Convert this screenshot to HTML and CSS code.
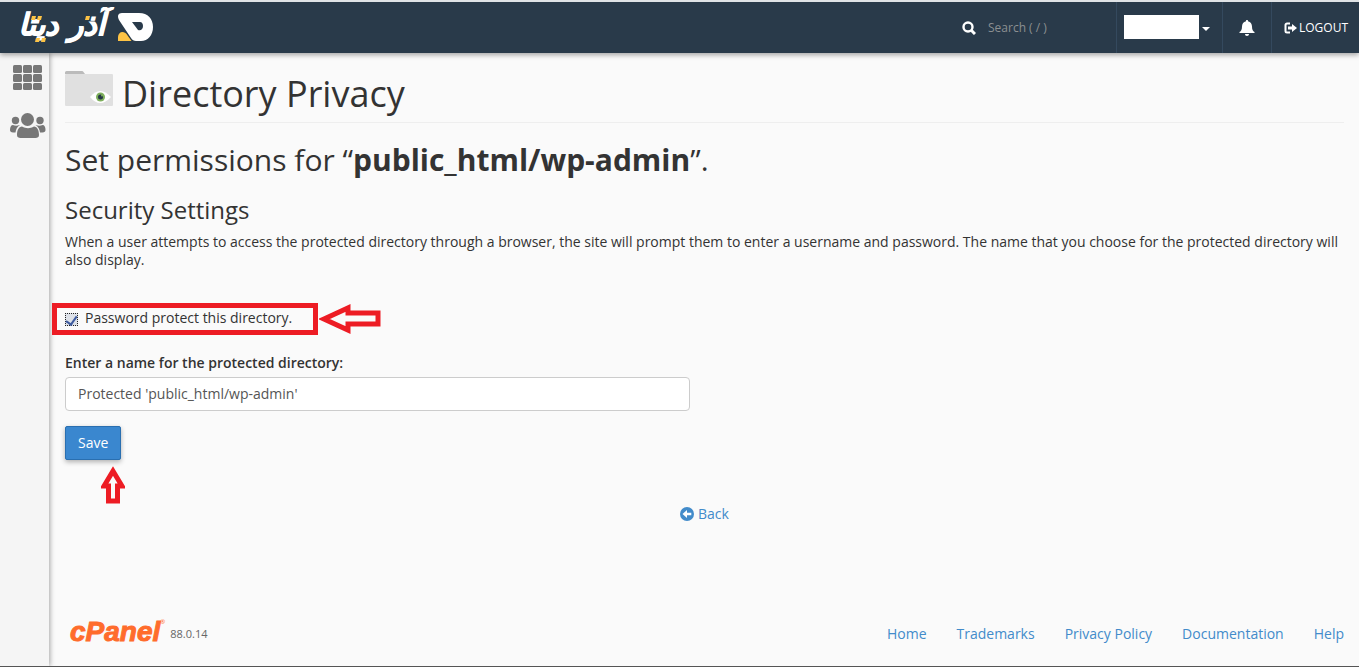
FILE: index.html
```html
<!DOCTYPE html>
<html lang="en">
<head>
<meta charset="utf-8">
<title>Directory Privacy</title>
<link rel="stylesheet" href="styles.css">
</head>
<body>
<header class="topbar">
  <a class="brand" href="#" aria-label="Home page">
    <svg width="136" height="40" viewBox="0 0 136 40">
      <text class="brand-text" x="87" y="28" text-anchor="start" direction="rtl" lang="fa">آذر دیتا</text>
      <path fill="#fdc345" d="M14 9h4l-1 4h-4zM20 9h4l-1 4h-4zM18 31h4l-1 4h-4zM24 31h4l-1 4h-4zM68 9h4l-1 4h-4z"/>
      <path fill="#fff" fill-rule="evenodd" d="M104 6h17c9 0 14 6 14 14s-5 14-12 14h-5c-2 0-4-1-5-3L101 13c-2-4-1-7 3-7zM114 15l6 8c3 1 5-1 5-4 0-2-1-4-3-4z"/>
      <path fill="#fdc345" d="M100 34v-4c0-3 2-5 4.500-5 2 0 3 1 4 2l5 7z"/>
    </svg>
  </a>
  <form class="search">
    <svg width="14" height="14" viewBox="0 0 14 14" aria-hidden="true"><circle cx="6" cy="6" r="4.500" fill="none" stroke="#fff" stroke-width="2.400"/><path d="M9 9l4 4" stroke="#fff" stroke-width="3"/></svg>
    <input type="text" aria-label="Search" placeholder="Search ( / )">
  </form>
  <button class="account" type="button" aria-label="Account"><span class="account-name"></span><span class="caret"></span></button>
  <button class="alerts" type="button" aria-label="Notifications">
    <svg width="16" height="16" viewBox="0 0 16 16" fill="#fff"><path d="M8 0c.8 0 1.100.5 1 1.200 2.500.6 4 2.600 4 5.300 0 3 .8 4.500 2.500 5.500v1H.5v-1C2.200 11 3 9.500 3 6.500c0-2.700 1.500-4.700 4-5.300C6.900.5 7.200 0 8 0zM6 14h4c0 1.200-.8 2-2 2s-2-.8-2-2z"/></svg>
  </button>
  <a class="logout" href="#"><svg width="13" height="12" viewBox="0 0 13 12" aria-hidden="true"><path d="M6 1.500H3A1.500 1.500 0 0 0 1.500 3v6A1.500 1.500 0 0 0 3 10.500h3" fill="none" stroke="#fff" stroke-width="2"/><path fill="#fff" d="M4 4.500h4V2l5 4-5 4V7.500H4z"/></svg><span>LOGOUT</span></a>
</header>
<div class="page">
  <nav class="sidebar" aria-label="Main">
    <a href="#" aria-label="Tools"><svg width="30" height="26" viewBox="0 0 30 26" fill="#777"><rect width="9" height="8" rx="1.500"/><rect x="10" width="9" height="8" rx="1.500"/><rect x="20" width="9" height="8" rx="1.500"/><rect y="9" width="9" height="8" rx="1.500"/><rect x="10" y="9" width="9" height="8" rx="1.500"/><rect x="20" y="9" width="9" height="8" rx="1.500"/><rect y="18" width="9" height="7" rx="1.500"/><rect x="10" y="18" width="9" height="7" rx="1.500"/><rect x="20" y="18" width="9" height="7" rx="1.500"/></svg></a>
    <a href="#" aria-label="User manager"><svg width="36" height="26" viewBox="0 0 36 26" fill="#777"><circle cx="17.500" cy="6.500" r="6.500"/><circle cx="5.500" cy="7.500" r="3.700"/><circle cx="30" cy="7.500" r="3.700"/><path d="M7 22c0-5 2-8.500 5-8.500 2 1.300 4 1.700 6 1.700s4-.4 6-1.700c3 0 5 3.500 5 8.500 0 2.300-1.500 3-3.500 3h-15C8.500 25 7 24.300 7 22z"/><path d="M3 12c2 1 4 1 7 0-3 2-4 4-4.500 7.500H3c-2 0-3-1-3-2.500C0 14 1 12 3 12zM32.500 12c-2 1-4 1-7 0 3 2 4 4 4.500 7.500h2.500c2 0 3-1 3-2.500 0-3-1-5-3-5z"/></svg></a>
  </nav>
  <div class="content">
    <main>
      <h1><svg width="48" height="36" viewBox="0 0 48 36" aria-hidden="true"><rect y="3" width="48" height="32" rx="1" fill="#e0e0e0"/><path fill="#bbb" d="M0 3V1.500Q0 0 1.500 0H17q1 0 1.500 1L20 3z"/><path fill="#fff" d="M25 26q10-12 21 0-11 12-21 0z"/><circle cx="35.500" cy="26" r="4.500" fill="#7fb05d"/><circle cx="35.500" cy="26" r="2.500" fill="#253746"/><circle cx="37" cy="24.500" r="1" fill="#7fb05d"/></svg><span>Directory Privacy</span></h1>
      <h2>Set permissions for “<strong>public_html/wp-admin</strong>”.</h2>
      <h3>Security Settings</h3>
      <p>When a user attempts to access the protected directory through a browser, the site will prompt them to enter a username and password. The name that you choose for the protected directory will also display.</p>
      <form>
        <div class="protect">
          <input id="protect" type="checkbox" checked><label for="protect">Password protect this directory.</label>
          <svg class="arrow-left" width="64" height="30" viewBox="0 0 64 30" aria-hidden="true"><path d="M5 15L29 4v5h30v11H29v6z"/></svg>
        </div>
        <label class="name-label" for="dirname">Enter a name for the protected directory:</label>
        <input class="name-input" id="dirname" type="text" value="Protected 'public_html/wp-admin'">
        <div class="save-row">
          <button class="save" type="submit">Save</button>
          <svg class="arrow-up" width="24" height="38" viewBox="0 0 24 38" aria-hidden="true"><path d="M12 5L3 20h4.500v15h9V20H21z"/></svg>
        </div>
      </form>
      <a class="back" href="#"><svg width="14" height="14" viewBox="0 0 14 14" aria-hidden="true"><circle cx="7" cy="7" r="7" fill="#428bca"/><path fill="#fff" d="M2.500 7L7 3v2.800h4.300v2.400H7V11z"/></svg><span>Back</span></a>
    </main>
    <footer>
      <span class="cpanel">cPanel</span><span class="reg">®</span><span class="version">88.0.14</span>
      <nav class="links" aria-label="Footer"><a href="#">Home</a><a href="#">Trademarks</a><a href="#">Privacy Policy</a><a href="#">Documentation</a><a href="#">Help</a></nav>
    </footer>
  </div>
</div>
</body>
</html>
```
FILE: styles.css
```css
* { box-sizing: border-box; }
body {
  margin: 0;
  min-height: 100vh;
  display: flex;
  flex-direction: column;
  border-top: 2px solid #dfe3e6;
  border-bottom: 1px solid #555;
  background: #fafafa;
  color: #333;
  font: 14px/18px "Open Sans", "Noto Sans", sans-serif;
}
a { color: #428bca; text-decoration: none; }
svg { display: block; flex: none; }
button, input { font: inherit; }

.topbar {
  position: relative;
  z-index: 2;
  display: flex;
  height: 51px;
  background: #293a4a;
  box-shadow: 0 2px 5px rgba(0, 0, 0, .35);
}
.brand { margin: 5px auto 0 18px; }
.brand-text { font: italic bold 30px "DejaVu Sans", sans-serif; fill: #fff; stroke: #fff; stroke-width: 1px; }
.search { display: flex; align-items: center; width: 154px; gap: 12px; }
.search input {
  flex: 1;
  min-width: 0;
  padding: 0;
  border: 0;
  background: none;
  color: #fff;
  font-size: 12px;
}
.search input::placeholder { color: #8b8f91; opacity: 1; }
.account, .alerts, .logout {
  display: flex;
  align-items: center;
  border: 0;
  border-left: 1px solid #34495e;
  background: none;
  color: #fff;
}
.account { width: 106px; padding: 0 7px 2px; gap: 3px; }
.account-name { width: 75px; height: 24px; background: #fff; }
.caret { margin-top: 4px; border: 4px solid transparent; border-top-color: #fff; border-bottom: 0; }
.alerts { width: 49px; padding: 0; justify-content: center; }
.logout { width: 88px; padding-left: 12px; gap: 2px; font-size: 12px; }

.page { flex: 1; display: flex; }
.sidebar {
  flex: none;
  width: 49px;
  display: flex;
  flex-direction: column;
  align-items: center;
  gap: 22px;
  padding: 12px 0 0 6px;
  background: #f5f5f5;
  box-shadow: 1px 0 5px rgba(0, 0, 0, .35);
}
.content { flex: 1; min-width: 0; display: flex; flex-direction: column; padding: 0 15px 0 16px; }
h1, h2, h3, p { margin: 0; font-weight: 400; }
h1 {
  display: flex;
  gap: 9px;
  padding: 18px 0 5px;
  border-bottom: 1px solid #eee;
  font-size: 36px;
  line-height: 46px;
}
h2 { margin-top: 19px; font-size: 30px; line-height: 36px; }
h3 { margin-top: 18px; font-size: 24px; line-height: 28px; }
p { margin-top: 9px; }

.protect {
  position: relative;
  display: flex;
  align-items: center;
  gap: 7px;
  width: 266px;
  height: 32px;
  margin: 34px 0 0 -13px;
  padding: 0 8px 2px;
  border: 5px solid #ed1c24;
}
.protect input {
  appearance: none;
  width: 13px;
  height: 13px;
  margin: 3px 0 0 0;
  padding-bottom: 2px;
  border: 1px dotted #222;
  background: #dde1e8;
  display: grid;
  place-items: center;
}
.protect input::before {
  content: "";
  width: 5px;
  height: 9px;
  border: solid #3d5a9e;
  border-width: 0 2px 2px 0;
  transform: rotate(35deg);
}
.arrow-left, .arrow-up { position: absolute; fill: #fafafa; stroke: #ed1c24; stroke-width: 5px; }
.arrow-left { left: 262px; top: -4px; }
.arrow-up { left: 36px; top: 40px; }
.name-label { display: block; margin-top: 19px; font-weight: 600; }
.name-input {
  display: block;
  width: 625px;
  max-width: 100%;
  height: 34px;
  margin-top: 5px;
  padding: 0 12px 2px;
  border: 1px solid #ccc;
  border-radius: 4px;
  background: #fff;
  color: #555;
}
.save-row { position: relative; margin-top: 15px; }
.save {
  display: block;
  height: 34px;
  padding: 0 12px;
  border: 1px solid #2a6fb0;
  border-radius: 2px;
  background: #3a87cf;
  box-shadow: 0 2px 5px rgba(0, 0, 0, .3);
  color: #fff;
}
.back { display: flex; justify-content: center; align-items: center; gap: 4px; margin-top: 45px; }
footer { display: flex; align-items: center; margin-top: auto; padding: 0 0 18px 5px; }
.cpanel { color: #ff6c2c; font: italic bold 28px/32px "Liberation Sans", sans-serif; -webkit-text-stroke: 1px #ff6c2c; }
.reg { align-self: flex-start; color: #ff6c2c; font-size: 6px; line-height: 12px; }
.version { margin: 4px 0 0 5px; color: #666; font-size: 11px; }
.links { display: flex; gap: 30px; margin: 4px 0 0 auto; }
```
